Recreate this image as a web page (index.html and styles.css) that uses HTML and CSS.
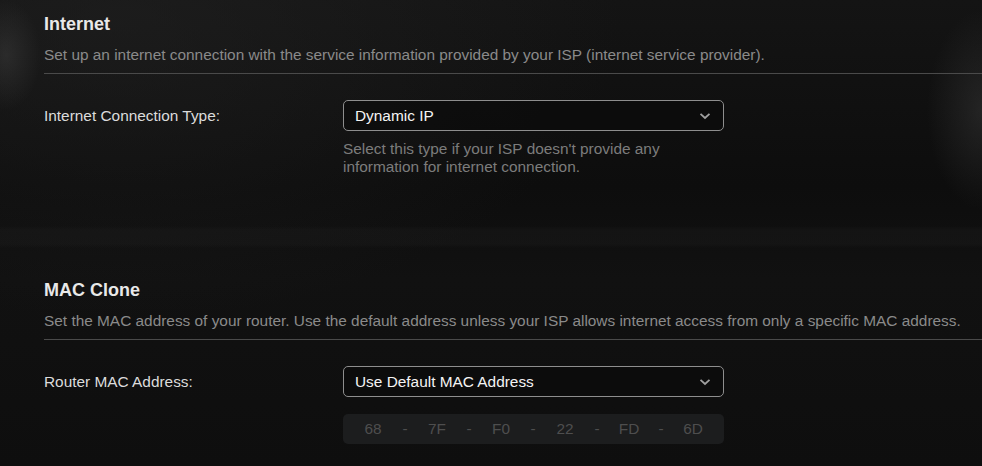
FILE: index.html
```html
<!DOCTYPE html>
<html lang="en">
<head>
<meta charset="utf-8">
<title>Internet</title>
<link rel="stylesheet" href="styles.css">
</head>
<body>
<main class="page">
  <section class="section">
    <h2 class="section-title">Internet</h2>
    <p class="section-desc">Set up an internet connection with the service information provided by your ISP (internet service provider).</p>
    <div class="divider"></div>
    <div class="row">
      <label class="row-label">Internet Connection Type:</label>
      <div class="row-control">
        <div class="select">
          <span class="select-value">Dynamic IP</span>
          <svg class="chevron" width="12" height="8" viewBox="0 0 12 8"><path d="M1.5 1.8 L6 6 L10.5 1.8" fill="none" stroke="#a0a0a0" stroke-width="1.8"/></svg>
        </div>
        <p class="hint">Select this type if your ISP doesn't provide any information for internet connection.</p>
      </div>
    </div>
  </section>

  <section class="section section-mac">
    <h2 class="section-title">MAC Clone</h2>
    <p class="section-desc">Set the MAC address of your router. Use the default address unless your ISP allows internet access from only a specific MAC address.</p>
    <div class="divider"></div>
    <div class="row">
      <label class="row-label">Router MAC Address:</label>
      <div class="row-control">
        <div class="select">
          <span class="select-value">Use Default MAC Address</span>
          <svg class="chevron" width="12" height="8" viewBox="0 0 12 8"><path d="M1.5 1.8 L6 6 L10.5 1.8" fill="none" stroke="#a0a0a0" stroke-width="1.8"/></svg>
        </div>
        <div class="mac-field">
          <span class="octet">68</span><span class="sep">-</span>
          <span class="octet">7F</span><span class="sep">-</span>
          <span class="octet">F0</span><span class="sep">-</span>
          <span class="octet">22</span><span class="sep">-</span>
          <span class="octet">FD</span><span class="sep">-</span>
          <span class="octet">6D</span>
        </div>
      </div>
    </div>
  </section>
</main>
</body>
</html>
```

FILE: styles.css
```css
html, body {
  margin: 0;
  padding: 0;
}

body {
  width: 982px;
  height: 466px;
  overflow: hidden;
  font-family: "Liberation Sans", Arial, sans-serif;
  background-color: #101010;
  background-image:
    radial-gradient(ellipse 35px 55px at 6px 55px, rgba(70,70,70,0.4), rgba(70,70,70,0) 100%),
    radial-gradient(ellipse 55px 100px at 982px 110px, rgba(60,60,60,0.45), rgba(60,60,60,0) 100%),
    linear-gradient(180deg, rgba(0,0,0,0) 226px, rgba(34,34,34,0.25) 230px, rgba(34,34,34,0.25) 244px, rgba(0,0,0,0) 248px),
    radial-gradient(ellipse 500px 300px at 120px 20px, rgba(36,36,36,0.5), rgba(36,36,36,0) 100%),
    linear-gradient(180deg, #141414 0%, #0d0d0d 40%, #111111 60%, #0e0e0e 100%);
}

.page {
  padding: 13px 0 0 44px;
}

.section-title {
  margin: 0;
  font-size: 18px;
  line-height: 22px;
  font-weight: bold;
  color: #e8e8e8;
}

.section-desc {
  margin: 10px 0 0;
  font-size: 15.4px;
  line-height: 20px;
  color: #8a8a8a;
  white-space: nowrap;
}

.divider {
  margin-top: 8px;
  height: 1px;
  background: #4a4a4a;
}

.row {
  display: grid;
  grid-template-columns: 299px 381px;
  margin-top: 26px;
}

.row-label {
  height: 31px;
  display: flex;
  align-items: center;
  font-size: 15.4px;
  color: #dcdcdc;
}

.select {
  box-sizing: border-box;
  height: 31px;
  border: 1px solid #8e8e8e;
  border-radius: 5px;
  display: flex;
  align-items: center;
  justify-content: space-between;
  padding: 0 12px 0 11px;
  background: rgba(10,10,10,0.6);
}

.select-value {
  font-size: 15.4px;
  color: #f4f4f4;
}

.chevron {
  display: block;
}

.hint {
  margin: 9px 0 0;
  font-size: 15.4px;
  line-height: 18px;
  color: #7c7c7c;
}

.section-mac {
  margin-top: 103px;
}

.mac-field {
  box-sizing: border-box;
  margin-top: 17px;
  height: 30px;
  border-radius: 5px;
  background: #1c1d1e;
  display: grid;
  grid-template-columns: 40px 24px 40px 24px 40px 24px 40px 24px 40px 24px 40px;
  padding: 0 10px;
  align-items: center;
  font-size: 15.4px;
  color: #4e4e4e;
}

.octet, .sep {
  text-align: center;
}
```
